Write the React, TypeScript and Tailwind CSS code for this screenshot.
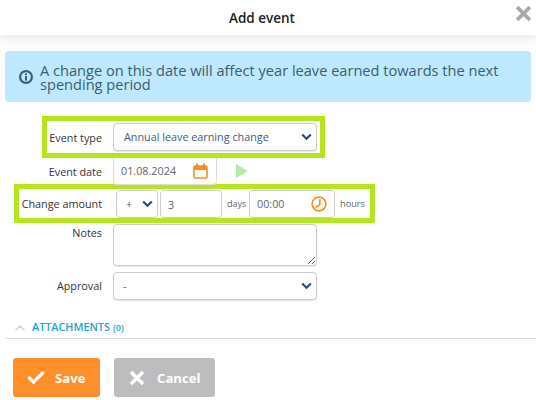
import { Check, ChevronUp } from 'lucide-react';

const font = { fontFamily: '"Open Sans", "Noto Sans", sans-serif' };

function Chevron() {
  return (
    <svg className="pointer-events-none absolute right-[5px] top-1/2 -mt-[4px] h-[8px] w-[11px]" viewBox="0 0 11 8" fill="none">
      <path d="M1.2 1.5 5.5 5.8 9.8 1.5" stroke="#2f4a7a" strokeWidth="2.2" />
    </svg>
  );
}

function CalendarIcon() {
  return (
    <svg className="h-[16px] w-[15px]" viewBox="0 0 15 16" fill="none">
      <rect x="1" y="3" width="13" height="12" rx="1.5" stroke="#fb8c1e" strokeWidth="1.6" />
      <rect x="1" y="3" width="13" height="4" fill="#fb8c1e" />
      <rect x="3" y="0.5" width="2" height="3.5" fill="#fb8c1e" />
      <rect x="10" y="0.5" width="2" height="3.5" fill="#fb8c1e" />
    </svg>
  );
}

function ClockIcon() {
  return (
    <svg className="h-[16px] w-[16px]" viewBox="0 0 16 16" fill="none">
      <circle cx="8" cy="8" r="6.9" stroke="#fb8c1e" strokeWidth="1.6" />
      <path d="M8.8 3.2V8.6L4.6 11.6" stroke="#fb8c1e" strokeWidth="1.6" />
    </svg>
  );
}

function InfoIcon() {
  return (
    <svg className="h-[14px] w-[14px] shrink-0" viewBox="0 0 14 14" fill="none">
      <circle cx="7" cy="7" r="5.9" stroke="#3f5d6e" strokeWidth="2.2" />
      <rect x="6" y="3.4" width="2" height="1.7" fill="#3f5d6e" />
      <rect x="6" y="6" width="2" height="4.6" fill="#3f5d6e" />
    </svg>
  );
}

function CrossIcon({ className }: { className: string }) {
  return (
    <svg className={className} viewBox="0 0 16 16" fill="none">
      <path d="M2 2 14 14M14 2 2 14" stroke="currentColor" strokeWidth="3.4" />
    </svg>
  );
}

export default function App() {
  return (
    <div className="h-[400px] w-[536px] overflow-hidden bg-white text-[10.8px] text-[#333]" style={font}>
      {/* Header */}
      <div className="relative flex h-[35px] items-center justify-center bg-white pr-[12px] shadow-[0_4px_12px_rgba(0,0,0,0.09)]">
        <h1 className="text-[13.5px] font-semibold leading-[24px] text-[#222]">Add event</h1>
        <CrossIcon className="absolute right-[4px] top-[5px] h-[17px] w-[17px] text-[#a9a9a9]" />
      </div>

      {/* Alert */}
      <div className="mx-[5px] mt-[16px] flex h-[51px] items-center rounded-[4px] bg-[#bde8fd] pl-[14px] pr-[8px] text-[#3f5d6e]">
        <InfoIcon />
        <p className="ml-[7px] text-[14.6px] font-medium leading-[14px]">
          A change on this date will affect year leave earned towards the next spending period
        </p>
      </div>

      {/* Form */}
      <div className="mt-[14px]">
        <div className="ml-[42px] flex h-[42px] w-[283px] items-center border-[5px] border-[#b5e61d]">
          <label className="w-[55px] pt-[2px] text-right">Event type</label>
          <div className="relative ml-[11px]">
            <select className="h-[28px] w-[204px] appearance-none rounded-[4px] border border-[#ccc] bg-white pl-[10px] pt-[1px] text-[#3d5a80] shadow-[0_1px_1px_rgba(0,0,0,0.1)]">
              <option>Annual leave earning change</option>
            </select>
            <Chevron />
          </div>
        </div>

        <div className="flex h-[26px] items-center">
          <label className="w-[102px] pt-[2px] text-right">Event date</label>
          <div className="ml-[11px] flex h-[27px] w-[104px] items-center justify-between rounded-b-[4px] border border-t-0 border-[#ddd] pl-[7px] pr-[8px] text-[#666]">
            <span className="pt-[2px]">01.08.2024</span>
            <CalendarIcon />
          </div>
          <svg className="ml-[19px] h-[14px] w-[12px]" viewBox="0 0 12 14">
            <path d="M0 0 12 7 0 14Z" fill="#b7e8a6" />
          </svg>
        </div>

        <div className="ml-[14px] flex h-[39px] w-[361px] items-center border-[5px] border-[#b5e61d]">
          <label className="w-[83px] pt-[2px] text-right">Change amount</label>
          <div className="relative ml-[14px]">
            <select className="h-[28px] w-[42px] appearance-none rounded-[4px] border border-[#ccc] bg-white pl-[9px] pt-[1px] text-[#3d5a80]">
              <option>+</option>
            </select>
            <Chevron />
          </div>
          <input
            className="ml-[2px] h-[28px] w-[62px] rounded-[4px] border border-[#ccc] pl-[7px] pt-[1px] text-[#666] outline-none"
            defaultValue="3"
          />
          <span className="ml-[5px] w-[19px] pt-[1px] text-[9px] text-[#666]">days</span>
          <div className="ml-[3px] flex h-[28px] w-[86px] items-center justify-between rounded-[4px] border border-[#ccc] pl-[7px] pr-[7px] text-[#666]">
            <span className="pt-[1px]">00:00</span>
            <ClockIcon />
          </div>
          <span className="ml-[5px] pt-[1px] text-[9.2px] text-[#666]">hours</span>
        </div>

        <div className="mt-[1px] flex h-[42px] items-start">
          <label className="w-[102px] pt-[1px] text-right">Notes</label>
          <textarea className="ml-[11px] h-[42px] w-[204px] rounded-[4px] border border-[#ccc] shadow-[0_1px_1px_rgba(0,0,0,0.1)] outline-none" />
        </div>

        <div className="mt-[6px] flex h-[28px] items-center">
          <label className="w-[102px] text-right">Approval</label>
          <div className="relative ml-[11px]">
            <select className="h-[28px] w-[204px] appearance-none rounded-[4px] border border-[#ccc] bg-white pl-[9px] text-[#3d5a80] shadow-[0_1px_1px_rgba(0,0,0,0.1)]">
              <option>-</option>
            </select>
            <Chevron />
          </div>
        </div>
      </div>

      {/* Attachments */}
      <div className="ml-[5px] mt-[20px] flex h-[19px] items-center border-b border-[#ddd] pb-[3px]">
        <ChevronUp className="ml-[7px] h-[16px] w-[16px] text-[#d4d4d4]" strokeWidth={2.5} />
        <span className="ml-[4px] text-[10.8px] font-semibold text-[#1ba5d1]">ATTACHMENTS</span>
        <span className="ml-[3px] text-[9px] font-semibold text-[#1ba5d1]">(0)</span>
      </div>

      {/* Buttons */}
      <div className="ml-[13px] mt-[19px] flex gap-[14px]">
        <button className="flex h-[39px] w-[87px] items-center rounded-[3px] bg-[#ff8f2b] pl-[13px] text-[13.2px] font-bold text-white">
          <Check className="h-[20px] w-[20px]" strokeWidth={4} />
          <span className="ml-[9px] pt-[3px]">Save</span>
        </button>
        <button className="flex h-[39px] w-[101px] items-center rounded-[3px] bg-[#bdbdbf] pl-[15px] text-[13.2px] font-bold text-white">
          <CrossIcon className="h-[16px] w-[16px]" />
          <span className="ml-[12px] pt-[3px]">Cancel</span>
        </button>
      </div>
    </div>
  );
}
